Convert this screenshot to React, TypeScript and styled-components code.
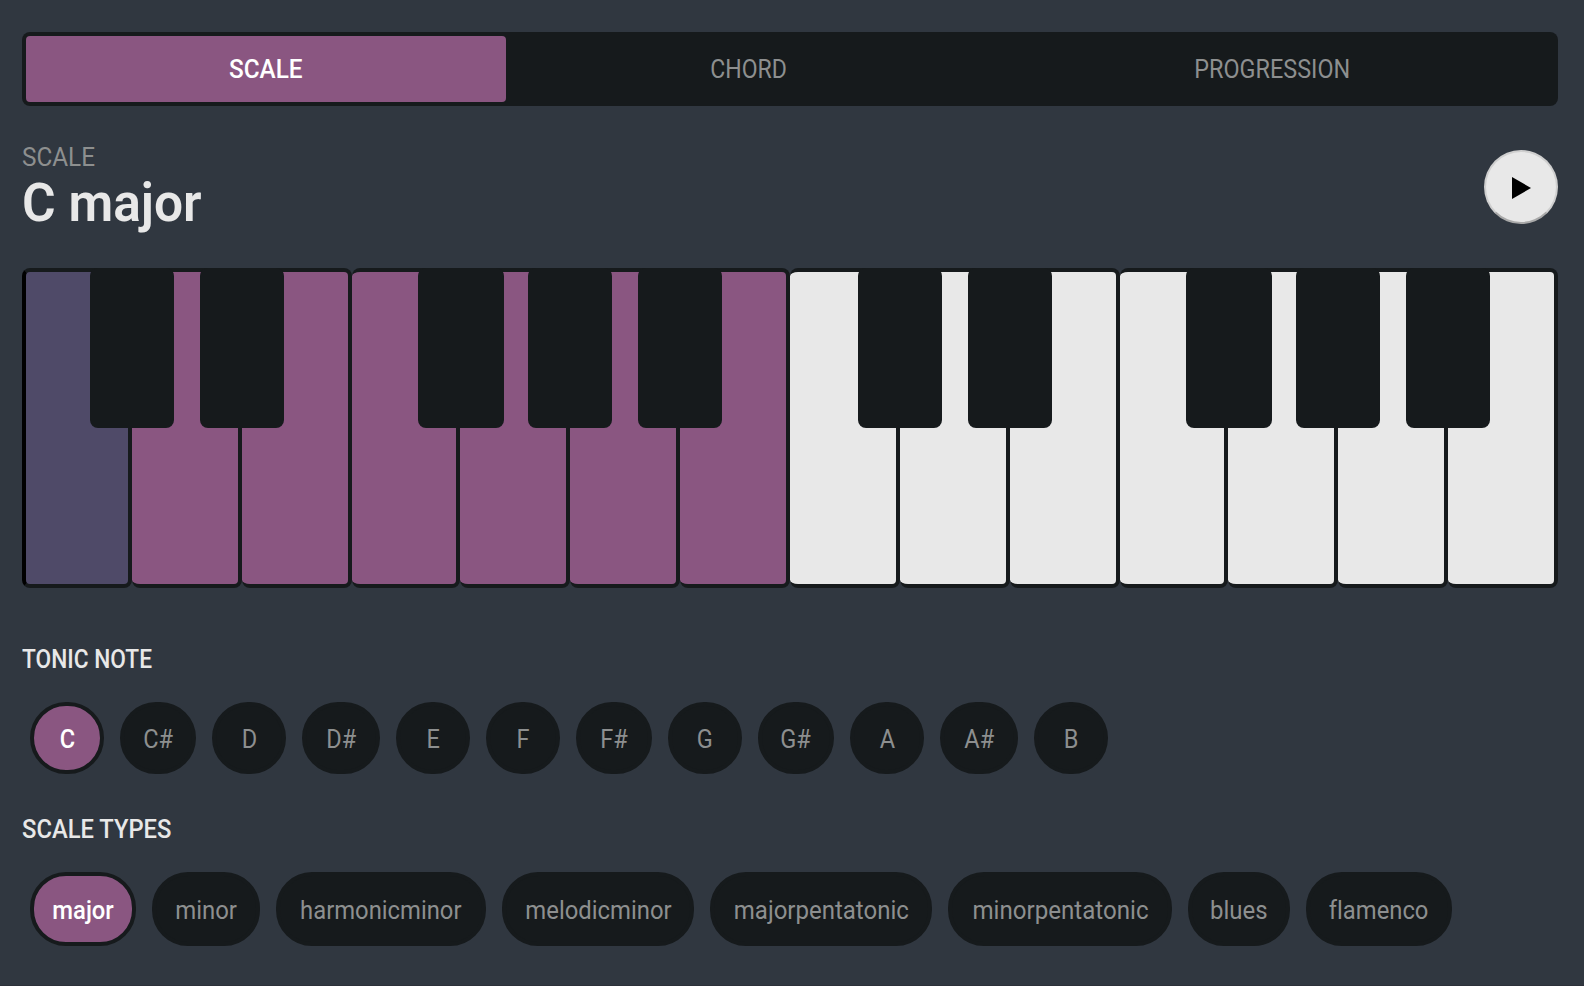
import React, { useState } from "react";
import styled, { createGlobalStyle, css } from "styled-components";

const color = {
  page: "#303740",
  panel: "#161a1c",
  accent: "#8a5681",
  tonic: "#4f4a68",
  ivory: "#e8e8e8",
  muted: "#8d8f8f",
};

const GlobalStyle = createGlobalStyle`
  * { box-sizing: border-box; }
  body {
    margin: 0;
    background: ${color.page};
    color: ${color.ivory};
    font-family: Roboto, "Liberation Sans", sans-serif;
    font-size: 25.6px;
    font-weight: 450;
    font-variant-ligatures: none;
    line-height: 32px;
  }
  button { font: inherit; font-variant-ligatures: none; cursor: pointer; }
`;

const Page = styled.main`
  display: flex;
  flex-direction: column;
  height: 986px;
  padding: 32px 26px 0 22px;
  overflow: hidden;
  border-bottom: 1px solid #2c3039;
`;

/* Condensed lettering: the type is set slightly narrower than its natural width. */
const Lettering = styled.span<{ $squeeze: number; $origin?: string }>`
  display: inline-block;
  white-space: nowrap;
  transform: scaleX(${(p) => p.$squeeze});
  transform-origin: ${(p) => p.$origin ?? "center"};
`;

const Tabs = styled.nav`
  display: grid;
  grid-template-columns: 480fr 485fr 563fr;
  height: 74px;
  padding: 4px;
  border-radius: 8px;
  background: ${color.panel};
`;

const Tab = styled.button<{ $active: boolean }>`
  padding: 0;
  border: 0;
  border-radius: 4px;
  background: ${(p) => (p.$active ? color.accent : "transparent")};
  color: ${(p) => (p.$active ? "#fff" : color.muted)};
  font-weight: ${(p) => (p.$active ? 500 : 450)};
`;

const Header = styled.header`
  display: flex;
  align-items: flex-start;
  justify-content: space-between;
  height: 118px;
  margin-top: 35px;
`;

const Titles = styled.div`
  display: flex;
  flex-direction: column;
`;

const Kicker = styled.div`
  color: ${color.muted};
`;

const Title = styled.h1`
  margin: 1px 0 0;
  font-size: 53.5px;
  font-weight: 650;
  line-height: 58px;
`;

const PlayButton = styled.button`
  display: flex;
  align-items: center;
  justify-content: center;
  width: 74px;
  height: 74px;
  margin-top: 9px;
  padding: 2px 0 0;
  border: 2px solid #cfcfcf;
  border-bottom-color: #a9a9a9;
  border-radius: 50%;
  background: ${color.ivory};
`;

const Keyboard = styled.div`
  display: flex;
  height: 320px;
  margin-top: 9px;
`;

type Fill = "tonic" | "accent" | "ivory";

const WhiteKey = styled.div<{ $width: number; $fill: Fill }>`
  position: relative;
  width: ${(p) => p.$width}px;
  border: 4px solid ${color.panel};
  border-left: 0;
  border-radius: 8px;
  background: ${(p) => color[p.$fill]};
  &:first-child {
    border-left: 4px solid #000;
  }
`;

const BlackKey = styled.div<{ $wide: boolean }>`
  position: absolute;
  z-index: 1;
  top: -4px;
  right: ${(p) => (p.$wide ? -48 : -46)}px;
  width: ${(p) => (p.$wide ? 86 : 84)}px;
  height: 160px;
  border-radius: 8px;
  background: ${color.panel};
`;

const Section = styled.section<{ $top: number }>`
  margin-top: ${(p) => p.$top}px;
`;

const SectionTitle = styled.h2`
  margin: 0;
  font-size: inherit;
  font-weight: 500;
`;

const ChipRow = styled.div<{ $height: number }>`
  display: flex;
  gap: 16px;
  height: ${(p) => p.$height}px;
  margin: 27px 0 0 8px;
`;

const Chip = styled.button<{ $width: number; $active: boolean }>`
  flex: none;
  width: ${(p) => p.$width}px;
  padding: 1px 0 0;
  border: 4px solid ${color.panel};
  border-radius: 36px;
  background: ${color.panel};
  color: ${color.muted};
  ${(p) =>
    p.$active &&
    css`
      background: ${color.accent};
      color: #fff;
      font-weight: 500;
    `}
`;

const tabs = [
  { name: "SCALE", squeeze: 0.95 },
  { name: "CHORD", squeeze: 0.9 },
  { name: "PROGRESSION", squeeze: 0.914 },
];

const octave = [
  { width: 110, sharp: true },
  { width: 110, sharp: true },
  { width: 110, sharp: false },
  { width: 108, sharp: true },
  { width: 110, sharp: true },
  { width: 110, sharp: true },
  { width: 110, sharp: false },
];
const keys = [...octave, ...octave];

const notes = [
  { name: "C", width: 74 },
  { name: "C#", width: 76 },
  { name: "D", width: 74 },
  { name: "D#", width: 78 },
  { name: "E", width: 74 },
  { name: "F", width: 74 },
  { name: "F#", width: 76 },
  { name: "G", width: 74 },
  { name: "G#", width: 76 },
  { name: "A", width: 74 },
  { name: "A#", width: 78 },
  { name: "B", width: 74 },
];

const scales = [
  { name: "major", width: 106, squeeze: 0.93 },
  { name: "minor", width: 108, squeeze: 0.935 },
  { name: "harmonicminor", width: 210, squeeze: 0.93 },
  { name: "melodicminor", width: 192, squeeze: 0.932 },
  { name: "majorpentatonic", width: 222, squeeze: 0.938 },
  { name: "minorpentatonic", width: 224, squeeze: 0.942 },
  { name: "blues", width: 102, squeeze: 0.935 },
  { name: "flamenco", width: 146, squeeze: 0.93 },
];

const keyFill = (i: number): Fill => (i === 0 ? "tonic" : i < 7 ? "accent" : "ivory");

export default function App() {
  const [tab, setTab] = useState("SCALE");
  const [note, setNote] = useState("C");
  const [scale, setScale] = useState("major");

  return (
    <Page>
      <GlobalStyle />
      <Tabs>
        {tabs.map((t) => (
          <Tab key={t.name} $active={t.name === tab} onClick={() => setTab(t.name)}>
            <Lettering $squeeze={t.squeeze}>{t.name}</Lettering>
          </Tab>
        ))}
      </Tabs>

      <Header>
        <Titles>
          <Kicker>
            <Lettering $squeeze={0.95} $origin="left">{tab}</Lettering>
          </Kicker>
          <Title>
            <Lettering $squeeze={0.962} $origin="left">{`${note} ${scale}`}</Lettering>
          </Title>
        </Titles>
        <PlayButton aria-label="Play">
          <svg width="19" height="22" viewBox="0 0 19 22">
            <path d="M0 0L19 11L0 22Z" fill="#000" />
          </svg>
        </PlayButton>
      </Header>

      <Keyboard>
        {keys.map((k, i) => (
          <WhiteKey key={i} $width={k.width} $fill={keyFill(i)}>
            {k.sharp && <BlackKey $wide={k.width === 108} />}
          </WhiteKey>
        ))}
      </Keyboard>

      <Section $top={55}>
        <SectionTitle>
          <Lettering $squeeze={0.887} $origin="left">TONIC NOTE</Lettering>
        </SectionTitle>
        <ChipRow $height={72}>
          {notes.map((n) => (
            <Chip key={n.name} $width={n.width} $active={n.name === note} onClick={() => setNote(n.name)}>
              <Lettering $squeeze={0.92}>{n.name}</Lettering>
            </Chip>
          ))}
        </ChipRow>
      </Section>

      <Section $top={39}>
        <SectionTitle>
          <Lettering $squeeze={0.928} $origin="left">SCALE TYPES</Lettering>
        </SectionTitle>
        <ChipRow $height={74}>
          {scales.map((s) => (
            <Chip key={s.name} $width={s.width} $active={s.name === scale} onClick={() => setScale(s.name)}>
              <Lettering $squeeze={s.squeeze}>{s.name}</Lettering>
            </Chip>
          ))}
        </ChipRow>
      </Section>
    </Page>
  );
}
